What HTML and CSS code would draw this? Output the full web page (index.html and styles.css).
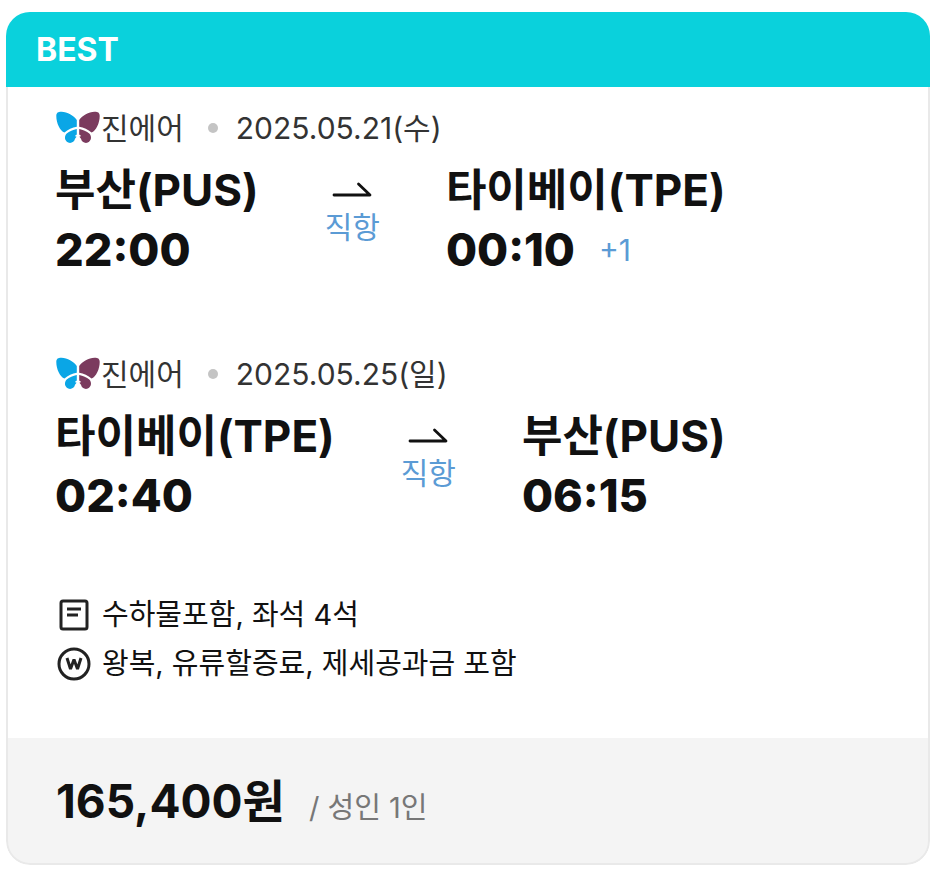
FILE: index.html
```html
<!DOCTYPE html>
<html lang="ko">

<head>
    <meta charset="UTF-8">
    <meta name="viewport" content="width=device-width, initial-scale=1.0">
    <title>항공권</title>
    <link rel="stylesheet" href="styles.css">
</head>

<body>

    <!-- shared icons -->
    <svg class="sprite" aria-hidden="true">
        <symbol id="jinair" viewBox="0 0 46 34">
            <g id="wing">
                <path d="M1.3 5C1.3 1.500 3.500 .7 6.500 .8c6 .2 12 3.700 15.300 8.200v6.700c-4.500 .6-9 2.800-12.300 5.800C5 20 1.300 12 1.300 5z" fill="#0aa6e6" />
                <path d="M21.800 18v5.500l-2 1.500 1.800 .8-1.600 2c-.5 3-4 5-6.800 3.700-4-2-4-6.500-1.500-9 2.500-2.500 6.500-3.500 10.100-4.500z" fill="#0aa6e6" />
            </g>
            <g transform="matrix(-1 0 0 1 46 0)">
                <path d="M1.3 5C1.3 1.500 3.500 .7 6.500 .8c6 .2 12 3.700 15.300 8.200v6.700c-4.500 .6-9 2.800-12.300 5.800C5 20 1.300 12 1.300 5z" fill="#7b3b5e" />
                <path d="M21.800 18v5.500l-2 1.500 1.800 .8-1.600 2c-.5 3-4 5-6.800 3.700-4-2-4-6.500-1.500-9 2.500-2.500 6.500-3.500 10.100-4.500z" fill="#7b3b5e" />
            </g>
        </symbol>
        <symbol id="arrow" viewBox="0 0 40 16">
            <path d="M2 13h36L26.500 2" fill="none" stroke="#111" stroke-width="2.8" stroke-linecap="round" stroke-linejoin="round" />
        </symbol>
    </svg>

    <article class="ticket">
        <header class="ticket-header">BEST</header>

        <div class="ticket-body">
            <section class="flight">
                <div class="airline">
                    <svg class="logo"><use href="#jinair" /></svg>
                    <span>진에어</span>
                    <span class="dot"></span>
                    <time datetime="2025-05-21">2025.05.21(수)</time>
                </div>
                <div class="route">
                    <div>
                        <div class="city">부산(PUS)</div>
                        <div class="time">22:00</div>
                    </div>
                    <div class="via">
                        <svg class="arrow"><use href="#arrow" /></svg>
                        <span>직항</span>
                    </div>
                    <div>
                        <div class="city">타이베이(TPE)</div>
                        <div class="time">00:10 <span class="next-day">+1</span></div>
                    </div>
                </div>
            </section>

            <section class="flight">
                <div class="airline">
                    <svg class="logo"><use href="#jinair" /></svg>
                    <span>진에어</span>
                    <span class="dot"></span>
                    <time datetime="2025-05-25">2025.05.25(일)</time>
                </div>
                <div class="route">
                    <div>
                        <div class="city">타이베이(TPE)</div>
                        <div class="time">02:40</div>
                    </div>
                    <div class="via">
                        <svg class="arrow"><use href="#arrow" /></svg>
                        <span>직항</span>
                    </div>
                    <div>
                        <div class="city">부산(PUS)</div>
                        <div class="time">06:15</div>
                    </div>
                </div>
            </section>

            <ul class="notes">
                <li>
                    <svg class="icon" viewBox="0 0 36 36" fill="none" stroke="#222" stroke-width="3">
                        <rect x="6" y="4" width="26" height="28" rx="2" />
                        <path d="M12 12h14M12 18h11" />
                    </svg>
                    <span>수하물포함, 좌석 4석</span>
                </li>
                <li>
                    <svg class="icon" viewBox="0 0 36 36" fill="none" stroke="#222" stroke-width="3">
                        <circle cx="19" cy="18" r="15" />
                        <path d="M12 12l3.500 11L19 13.500l3.500 9.500L26 12" stroke-linejoin="bevel" />
                    </svg>
                    <span>왕복, 유류할증료, 제세공과금 포함</span>
                </li>
            </ul>
        </div>

        <footer class="ticket-footer">
            <strong class="price">165,400원</strong>
            <span class="per">/ 성인 1인</span>
        </footer>
    </article>

</body>

</html>
```
FILE: styles.css
```css
* {
    box-sizing: border-box;
}

body {
    margin: 12px 7px 28px 6px;
    background: #fff;
    color: #111;
    font-family: Inter, "Noto Sans CJK KR", sans-serif;
    font-size: 30px;
    line-height: 48px;
}

.sprite {
    position: absolute;
    width: 0;
    height: 0;
}

.ticket {
    border-radius: 24px;
    background: #fff;
    overflow: hidden;
}

.ticket-header {
    padding: 0 30px;
    background: #0ad1dc;
    color: #fff;
    font-size: 32px;
    font-weight: 700;
    line-height: 75px;
}

.ticket-body {
    padding: 17px 47px 50px;
    border: solid #e9e9e9;
    border-width: 0 2px;
}

.flight + .flight {
    margin-top: 70px;
}

.airline {
    display: flex;
    align-items: center;
    color: #333;
}

.logo {
    width: 46px;
    height: 34px;
}

.dot {
    width: 10px;
    height: 10px;
    margin: 0 18px 0 24px;
    border-radius: 50%;
    background: #c4c4c4;
}

.route {
    display: flex;
    gap: 66px;
    padding-top: 8px;
}

.city,
.time {
    font-size: 44px;
    font-weight: 700;
    line-height: 60px;
    white-space: nowrap;
}

.time {
    display: flex;
    align-items: center;
    gap: 24px;
    font-size: 45px;
    font-weight: 800;
}

.next-day {
    color: #5b9bd5;
    font-size: 30px;
    font-weight: 400;
}

.via {
    display: flex;
    flex-direction: column;
    align-items: center;
    padding-top: 22px;
    color: #5b9bd5;
}

.arrow {
    width: 40px;
    height: 16px;
    margin-bottom: 5px;
}

.notes {
    margin: 64px 0 0;
    padding: 0;
    list-style: none;
    font-size: 29px;
}

.notes li {
    display: flex;
    align-items: center;
    gap: 11px;
    line-height: 49px;
}

.icon {
    width: 36px;
    height: 36px;
}

.ticket-footer {
    display: flex;
    align-items: baseline;
    gap: 24px;
    padding: 33px 48px 31px;
    border: 2px solid #e9e9e9;
    border-top: 0;
    border-radius: 0 0 24px 24px;
    background: #f4f4f4;
}

.price {
    font-size: 46px;
    font-weight: 700;
    line-height: 60px;
}

.per {
    color: #777;
    font-size: 29px;
}
```
